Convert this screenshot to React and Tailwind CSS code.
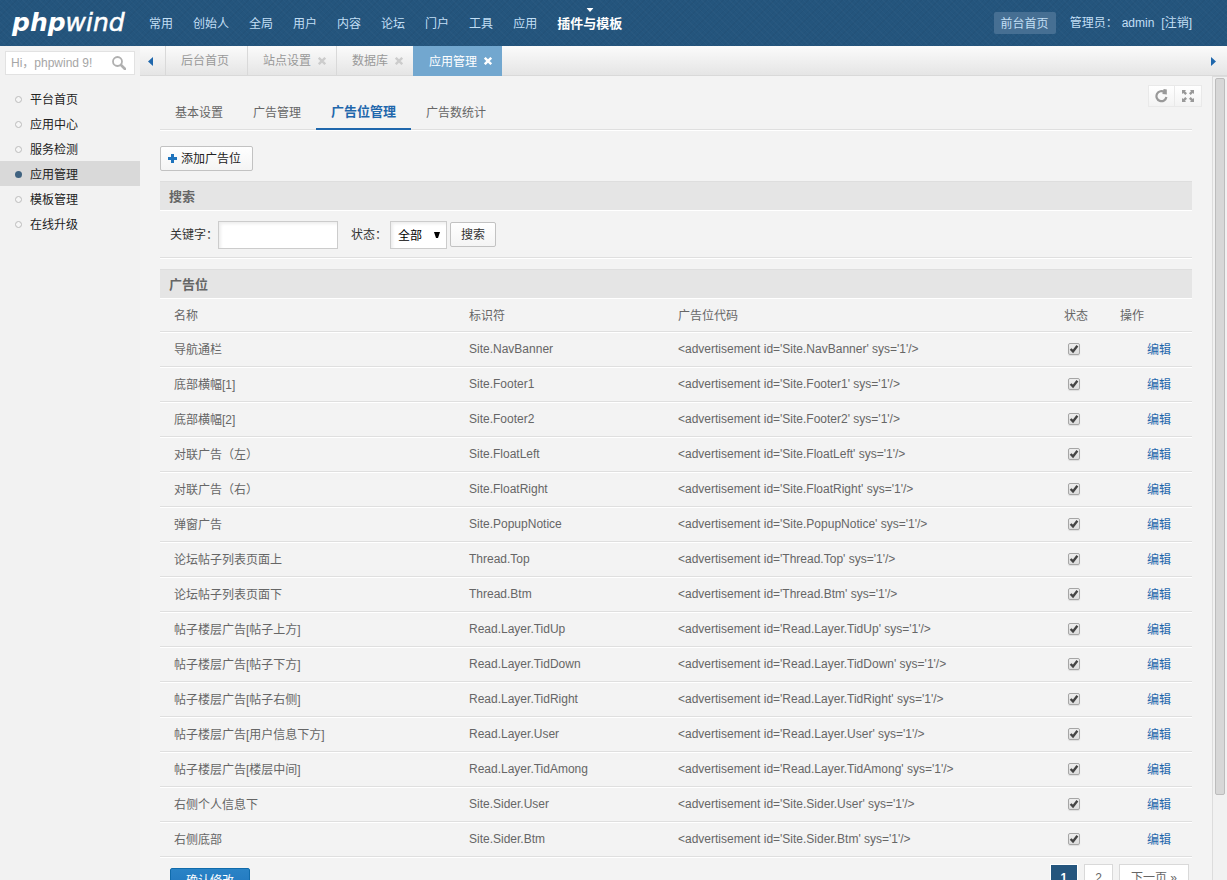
import React, { useState } from "react";

const navItems = ["常用", "创始人", "全局", "用户", "内容", "论坛", "门户", "工具", "应用", "插件与模板"];

const sideItems = ["平台首页", "应用中心", "服务检测", "应用管理", "模板管理", "在线升级"];

const openTabs = [
  { name: "后台首页", closable: false },
  { name: "站点设置", closable: true },
  { name: "数据库", closable: true },
  { name: "应用管理", closable: true },
];

const subTabs = ["基本设置", "广告管理", "广告位管理", "广告数统计"];

const initialRows = [
  { name: "导航通栏", id: "Site.NavBanner" },
  { name: "底部横幅[1]", id: "Site.Footer1" },
  { name: "底部横幅[2]", id: "Site.Footer2" },
  { name: "对联广告（左）", id: "Site.FloatLeft" },
  { name: "对联广告（右）", id: "Site.FloatRight" },
  { name: "弹窗广告", id: "Site.PopupNotice" },
  { name: "论坛帖子列表页面上", id: "Thread.Top" },
  { name: "论坛帖子列表页面下", id: "Thread.Btm" },
  { name: "帖子楼层广告[帖子上方]", id: "Read.Layer.TidUp" },
  { name: "帖子楼层广告[帖子下方]", id: "Read.Layer.TidDown" },
  { name: "帖子楼层广告[帖子右侧]", id: "Read.Layer.TidRight" },
  { name: "帖子楼层广告[用户信息下方]", id: "Read.Layer.User" },
  { name: "帖子楼层广告[楼层中间]", id: "Read.Layer.TidAmong" },
  { name: "右侧个人信息下", id: "Site.Sider.User" },
  { name: "右侧底部", id: "Site.Sider.Btm" },
];

const CloseIcon = () => (
  <svg className="h-2 w-2" viewBox="0 0 8 8" stroke="currentColor" strokeWidth="2.4" aria-hidden="true">
    <path d="M0.8 0.8l6.4 6.4M7.2 0.8L0.8 7.2" />
  </svg>
);

const Header = () => {
  const [active, setActive] = useState("插件与模板");

  return (
    <header className="flex h-[46px] shrink-0 items-center bg-[#24557d] bg-[repeating-linear-gradient(45deg,#ffffff05_0_1px,transparent_1px_4px),repeating-linear-gradient(-45deg,#00000009_0_1px,transparent_1px_4px)] pr-[35px] text-[#c2dff5]">
      <a
        href="#home"
        className="w-[139px] shrink-0 pl-3 font-['DejaVu_Sans'] text-[25px] leading-[44px] text-white italic"
      >
        <b>php</b>
        <span className="[-webkit-text-stroke:0.02em_#ffffff]">wind</span>
      </a>
      <nav className="flex h-full">
        {navItems.map((item) => (
          <a
            key={item}
            href="#nav"
            onClick={() => setActive(item)}
            className={
              active === item
                ? "relative px-[10px] text-[13px] leading-[48px] font-bold whitespace-nowrap text-white"
                : "px-[10px] leading-[48px] whitespace-nowrap"
            }
          >
            {item}
            {active === item && (
              <svg className="absolute top-2 left-1/2 h-1 w-[7px] -translate-x-1/2" viewBox="0 0 7 4" fill="currentColor" aria-hidden="true">
                <path d="M0 0h7L3.5 4z" />
              </svg>
            )}
          </a>
        ))}
      </nav>
      <div className="ml-auto flex items-center whitespace-nowrap">
        <a href="#front" className="mr-[14px] h-[22px] rounded-xs bg-[#466f93] px-[7px] leading-[24px]">
          前台首页
        </a>
        <span className="leading-[24px]">管理员：</span>
        <span className="ml-1 leading-[24px]">admin</span>
        <a href="#logout" className="ml-[7px] leading-[24px]">
          [注销]
        </a>
      </div>
    </header>
  );
};

const Sidebar = () => {
  const [active, setActive] = useState("应用管理");

  return (
    <aside className="w-[140px] shrink-0 bg-[#f2f2f2] pt-[5px]">
      <form className="mx-[5px] flex h-6 items-center border border-[#e2e2e2] bg-white pr-2" onSubmit={(e) => e.preventDefault()}>
        <input
          type="text"
          aria-label="搜索"
          placeholder="Hi，phpwind 9!"
          className="w-full min-w-0 flex-1 pl-[5px] outline-none placeholder:text-[#a6a6a6]"
        />
        <button type="submit" aria-label="搜索" className="text-[#b0b0b0]">
          <svg className="h-[14px] w-[14px]" viewBox="0 0 14 14" fill="none" stroke="currentColor" aria-hidden="true">
            <circle cx="5.5" cy="5.5" r="4.5" strokeWidth="1.8" />
            <path d="M9 9l4 4" strokeWidth="2.6" strokeLinecap="round" />
          </svg>
        </button>
      </form>
      <ul className="mt-[11px]">
        {sideItems.map((item) => (
          <li key={item} className={active === item ? "bg-[#d9d9d9]" : ""}>
            <a href="#menu" onClick={() => setActive(item)} className="flex h-[25px] items-center pt-[2px] pl-[15px] text-[#222222]">
              <span
                className={
                  active === item
                    ? "mr-2 mb-px h-[7px] w-[7px] rounded-full bg-[#3f6280]"
                    : "mr-2 mb-px h-[7px] w-[7px] rounded-full border border-[#bcbcbc] bg-[#f6f6f6]"
                }
              />
              {item}
            </a>
          </li>
        ))}
      </ul>
    </aside>
  );
};

const TabBar = () => {
  const [active, setActive] = useState("应用管理");

  return (
    <div className="flex h-[30px] shrink-0 border-b border-[#d9d9d9] bg-linear-to-b from-[#fbfbfb] to-[#e5e5e5]">
      <button type="button" aria-label="向左" className="flex w-[25px] items-center pt-px pl-2 text-[#1f67ac]">
        <svg className="h-[9px] w-[5px]" viewBox="0 0 5 9" fill="currentColor" aria-hidden="true">
          <path d="M5 0v9L0 4.5z" />
        </svg>
      </button>
      {openTabs.map((tab) => (
        <div
          key={tab.name}
          className={
            active === tab.name
              ? "-mb-px flex items-center border-l border-[#72a7cf] bg-[#72a7cf] pl-[15px] text-white"
              : "flex items-center border-l border-[#d9d9d9] pl-[15px] text-[#999999]"
          }
        >
          <button type="button" onClick={() => setActive(tab.name)} className="pt-px leading-[30px]">
            {tab.name}
          </button>
          {tab.closable ? (
            <button type="button" aria-label="关闭" className={active === tab.name ? "pr-[10px] pl-[7px]" : "pr-[10px] pl-[7px] text-[#cccccc]"}>
              <CloseIcon />
            </button>
          ) : (
            <span className="w-[18px]" />
          )}
        </div>
      ))}
      <button type="button" aria-label="向右" className="ml-auto flex items-center pt-px pr-[11px] text-[#1f67ac]">
        <svg className="h-[9px] w-[5px]" viewBox="0 0 5 9" fill="currentColor" aria-hidden="true">
          <path d="M0 0v9l5-4.5z" />
        </svg>
      </button>
    </div>
  );
};

const SectionTitle = ({ children }) => (
  <h2 className="h-[30px] border-t border-b border-t-[#dedede] border-b-white bg-[#e5e5e5] pl-[9px] text-[13px] leading-[29px] font-bold text-[#666666]">
    {children}
  </h2>
);

const SearchForm = () => (
  <form
    className="flex h-[47px] items-start border-b border-[#dfdfdf] pt-[10px] pl-[10px] text-[#333333] shadow-[0_1px_0_#ffffff]"
    onSubmit={(e) => e.preventDefault()}
  >
    <label htmlFor="keyword" className="leading-[28px]">
      关键字：
    </label>
    <input
      id="keyword"
      type="text"
      className="h-7 w-[120px] border border-[#cccccc] bg-white px-1 shadow-[inset_2px_2px_3px_#eeeeee] outline-none"
    />
    <label htmlFor="status" className="ml-[13px] leading-[28px]">
      状态：
    </label>
    <div className="relative ml-[3px]">
      <select
        id="status"
        className="h-7 w-[57px] appearance-none border border-[#cccccc] bg-white pt-px pl-[7px] text-black shadow-[inset_2px_2px_3px_#eeeeee] outline-none"
      >
        <option>全部</option>
        <option>启用</option>
        <option>停用</option>
      </select>
      <svg className="pointer-events-none absolute top-[11px] right-[7px] h-[6px] w-[6px]" viewBox="0 0 6 6" aria-hidden="true">
        <path d="M0 0h6L4 6H2z" />
      </svg>
    </div>
    <button
      type="submit"
      className="mt-px ml-[3px] h-[25px] rounded-xs border border-[#c2c2c2] bg-linear-to-b from-white to-[#f4f4f4] px-[10px] pt-px"
    >
      搜索
    </button>
  </form>
);

const StatusBox = ({ label, checked, onChange }) => (
  <label className="mx-1 mb-px grid h-3 w-3">
    <input
      type="checkbox"
      aria-label={label}
      checked={checked}
      onChange={onChange}
      className="col-start-1 row-start-1 h-3 w-3 appearance-none rounded-xs border border-[#a6a6a6] bg-linear-to-b from-[#eeeeee] to-[#dcdcdc] shadow-[0_1px_1px_#dddddd]"
    />
    {checked && (
      <svg className="pointer-events-none col-start-1 row-start-1 h-3 w-3" viewBox="0 0 12 12" fill="none" aria-hidden="true">
        <path d="M2.6 6l2.4 2.4L9.4 2.8" stroke="#444444" strokeWidth="2.4" />
      </svg>
    )}
  </label>
);

const AdTable = () => {
  const [rows, setRows] = useState(initialRows.map((row) => ({ ...row, enabled: true })));

  const toggleRow = (id) => {
    setRows(rows.map((row) => (row.id === id ? { ...row, enabled: !row.enabled } : row)));
  };

  return (
    <table className="w-full table-fixed border-separate border-spacing-0 text-left text-[#666666]">
      <thead>
        <tr className="h-[33px]">
          <th className="w-[294px] border-b border-[#dfdfdf] pt-px pl-[14px] font-normal">名称</th>
          <th className="w-[209px] border-b border-[#dfdfdf] pt-px pl-[15px] font-normal">标识符</th>
          <th className="border-b border-[#dfdfdf] pt-px pl-[15px] font-normal">广告位代码</th>
          <th className="w-[56px] border-b border-[#dfdfdf] pt-px pl-[15px] font-normal">状态</th>
          <th className="w-[87px] border-b border-[#dfdfdf] pt-px pl-[15px] font-normal">操作</th>
        </tr>
      </thead>
      <tbody>
        {rows.map((row) => (
          <tr key={row.id} className="h-[35px]">
            <td className="border-t border-b border-t-white border-b-[#dfdfdf] pl-[14px]">{row.name}</td>
            <td className="border-t border-b border-t-white border-b-[#dfdfdf] pb-px pl-[15px]">{row.id}</td>
            <td className="border-t border-b border-t-white border-b-[#dfdfdf] pb-px pl-[15px]">
              {`<advertisement id='${row.id}' sys='1'/>`}
            </td>
            <td className="border-t border-b border-t-white border-b-[#dfdfdf] pl-[15px]">
              <StatusBox label={row.name} checked={row.enabled} onChange={() => toggleRow(row.id)} />
            </td>
            <td className="border-t border-b border-t-white border-b-[#dfdfdf] pl-[42px]">
              <a href="#edit" className="text-[#1f67ac]">
                编辑
              </a>
            </td>
          </tr>
        ))}
      </tbody>
    </table>
  );
};

const AdPositions = () => {
  const [active, setActive] = useState("广告位管理");

  return (
    <main className="min-w-0 flex-1 overflow-hidden px-5 pt-5">
      <div className="relative">
        <nav className="flex h-[34px] border-b border-[#dfdfdf] shadow-[0_1px_0_#ffffff]">
          {subTabs.map((tab) => (
            <a
              key={tab}
              href="#tab"
              onClick={() => setActive(tab)}
              className={
                active === tab
                  ? "-mb-px border-b-2 border-[#1f67ac] px-[15px] text-[13px] leading-[32px] font-bold text-[#1f67ac]"
                  : "px-[15px] leading-[34px] text-[#666666]"
              }
            >
              {tab}
            </a>
          ))}
        </nav>
        <div className="absolute -top-[11px] -right-[10px] flex h-[22px] divide-x divide-[#e9e9e9] border border-[#e9e9e9] bg-linear-to-b from-white to-[#f3f3f3] text-[#999999]">
          <button type="button" aria-label="刷新" className="flex w-[26px] items-center justify-center">
            <svg className="h-[14px] w-[14px]" viewBox="0 0 14 14" fill="none" aria-hidden="true">
              <path d="M9.5 3.2A5 5 0 1 0 11.4 8" stroke="currentColor" strokeWidth="2.2" />
              <path d="M8.6 0L11.8 0.6V5.6L7.4 5z" fill="currentColor" />
            </svg>
          </button>
          <button type="button" aria-label="全屏" className="flex w-[26px] items-center justify-center">
            <svg className="h-[12px] w-[12px]" viewBox="0 0 12 12" fill="currentColor" aria-hidden="true">
              <path d="M0 0h4L3 1.3l2 2L3.3 5l-2-2L0 4zM12 0v4l-1.3-1-2 2L7 3.3l2-2L8 0zM0 12V8l1.3 1 2-2L5 8.7l-2 2L4 12zM12 12H8l1-1.3-2-2L8.7 7l2 2L12 8z" />
            </svg>
          </button>
        </div>
      </div>

      <button
        type="button"
        className="mt-4 mb-[10px] flex h-[25px] items-center gap-1 rounded-xs border border-[#c2c2c2] bg-linear-to-b from-white to-[#f4f4f4] pr-[11px] pl-[7px] text-[#222222]"
      >
        <svg className="h-[9px] w-[9px]" viewBox="0 0 9 9" fill="#1f74bd" aria-hidden="true">
          <path d="M3 0h3v3h3v3H6v3H3V6H0V3h3z" />
        </svg>
        <span className="pt-px">添加广告位</span>
      </button>

      <SectionTitle>搜索</SectionTitle>
      <SearchForm />

      <div className="mt-[11px]">
        <SectionTitle>广告位</SectionTitle>
        <AdTable />
      </div>

      <div className="flex items-start justify-between border-t border-white pt-[6px] pr-[3px] pl-[10px]">
        <button
          type="button"
          className="mt-1 h-[26px] w-20 rounded-xs border border-[#106bab] bg-linear-to-b from-[#2a83c6] to-[#1f74bd] text-white"
        >
          确认修改
        </button>
        <div className="flex gap-[6px] text-[#666666]">
          <a href="#page1" aria-current="page" className="border border-white bg-[#24557d] px-[10px] leading-[26px] font-bold text-white">
            1
          </a>
          <a href="#page2" className="border border-[#d9d9d9] bg-white px-[10px] leading-[26px]">
            2
          </a>
          <a href="#next" className="border border-[#d9d9d9] bg-white px-[11px] leading-[26px]">
            下一页 »
          </a>
        </div>
      </div>
    </main>
  );
};

const App = () => {
  return (
    <div className="flex h-screen flex-col overflow-hidden bg-[#f3f3f3] font-['Liberation_Sans','Noto_Sans_CJK_SC',sans-serif] text-xs">
      <Header />
      <div className="flex min-h-0 flex-1">
        <Sidebar />
        <div className="flex min-w-0 flex-1 flex-col">
          <TabBar />
          <div className="flex min-h-0 flex-1">
            <AdPositions />
            {/* Scroll track */}
            <div className="w-[15px] shrink-0 border-t border-l border-[#dcdcdc] bg-[#f1f1f1] pt-px pr-[2px] pl-[2px]">
              <div className="h-[89.4%] rounded-xs border border-[#bcbcbc] bg-[#d7d7d7]" />
            </div>
          </div>
        </div>
      </div>
    </div>
  );
};

export default App;
